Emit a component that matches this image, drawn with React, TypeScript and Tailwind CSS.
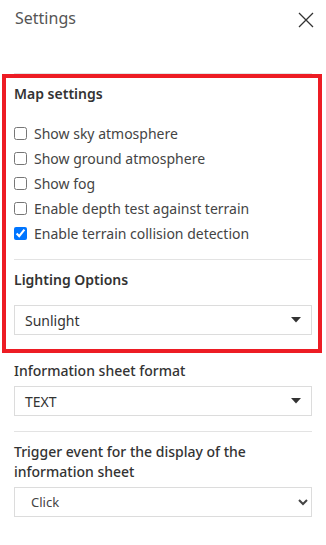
import React, { useState } from 'react';

const MAP_OPTIONS = [
  { id: 'sky', label: 'Show sky atmosphere', checked: false },
  { id: 'ground', label: 'Show ground atmosphere', checked: false },
  { id: 'fog', label: 'Show fog', checked: false },
  { id: 'depth', label: 'Enable depth test against terrain', checked: false },
  { id: 'collision', label: 'Enable terrain collision detection', checked: true },
];

const Caret = () => (
  <svg width="10" height="6" viewBox="0 0 10 6" className="shrink-0">
    <path d="M0 0 L10 0 L5 5.5 Z" fill="#333" />
  </svg>
);

const FakeSelect = ({ value }: { value: string }) => (
  <div className="h-[30px] border border-[#dcdcdc] flex items-center justify-between pl-[10px] pr-[10px]">
    <span className="text-[14px] text-[#333]">{value}</span>
    <Caret />
  </div>
);

const App: React.FC = () => {
  const [options, setOptions] = useState(MAP_OPTIONS);

  const toggle = (id: string) => {
    setOptions(opts => opts.map(o => (o.id === id ? { ...o, checked: !o.checked } : o)));
  };

  return (
    <div className="w-[326px] h-[545px] bg-white relative font-['Noto_Sans',sans-serif]">
      <div className="h-[73px] flex items-start justify-between pl-[15px] pr-[12px] pt-[6px]">
        <span className="text-[16px] leading-[24px] text-[#555]">Settings</span>
        <button className="mt-[6px]" aria-label="close">
          <svg width="16" height="16" viewBox="0 0 16 16">
            <path d="M1 1 L15 15 M15 1 L1 15" stroke="#333" strokeWidth="1.3" fill="none" />
          </svg>
        </button>
      </div>

      <div className="mx-[14px] border-t border-[#e3e3e3]" />

      <div className="px-[14px]">
        <h3 className="mt-[10px] text-[14px] leading-[20px] font-semibold text-[#333]">Map settings</h3>

        <div className="mt-[17px] flex flex-col">
          {options.map(o => (
            <label key={o.id} className="h-[25px] flex items-center gap-[7px] cursor-pointer">
              <input
                type="checkbox"
                checked={o.checked}
                onChange={() => toggle(o.id)}
                className="w-[13px] h-[13px] m-0 shrink-0"
              />
              <span className="text-[14px] text-[#444]">{o.label}</span>
            </label>
          ))}
        </div>

        <div className="mt-[13px] border-t border-[#e3e3e3]" />

        <h3 className="mt-[10px] text-[14px] leading-[20px] font-semibold text-[#333]">Lighting Options</h3>
        <div className="mt-[15px]">
          <FakeSelect value="Sunlight" />
        </div>

        <h3 className="mt-[26px] text-[14px] leading-[20px] font-medium text-[#333]">Information sheet format</h3>
        <div className="mt-[5px]">
          <FakeSelect value="TEXT" />
        </div>

        <div className="mt-[15px] border-t border-[#e3e3e3]" />

        <h3 className="mt-[10px] text-[14px] leading-[20px] font-medium text-[#333]">
          Trigger event for the display of the information sheet
        </h3>
        <select
          defaultValue="click"
          className="mt-[5px] w-full h-[30px] border border-[#dcdcdc] bg-white pl-[12px] pr-[6px] text-[13px] text-[#444]"
        >
          <option value="click">Click</option>
          <option value="hover">Hover</option>
        </select>
      </div>

      <div className="absolute left-[2px] top-[74px] w-[320px] h-[279px] border-4 border-[#ed1c24] pointer-events-none" />
    </div>
  );
};

export default App;
